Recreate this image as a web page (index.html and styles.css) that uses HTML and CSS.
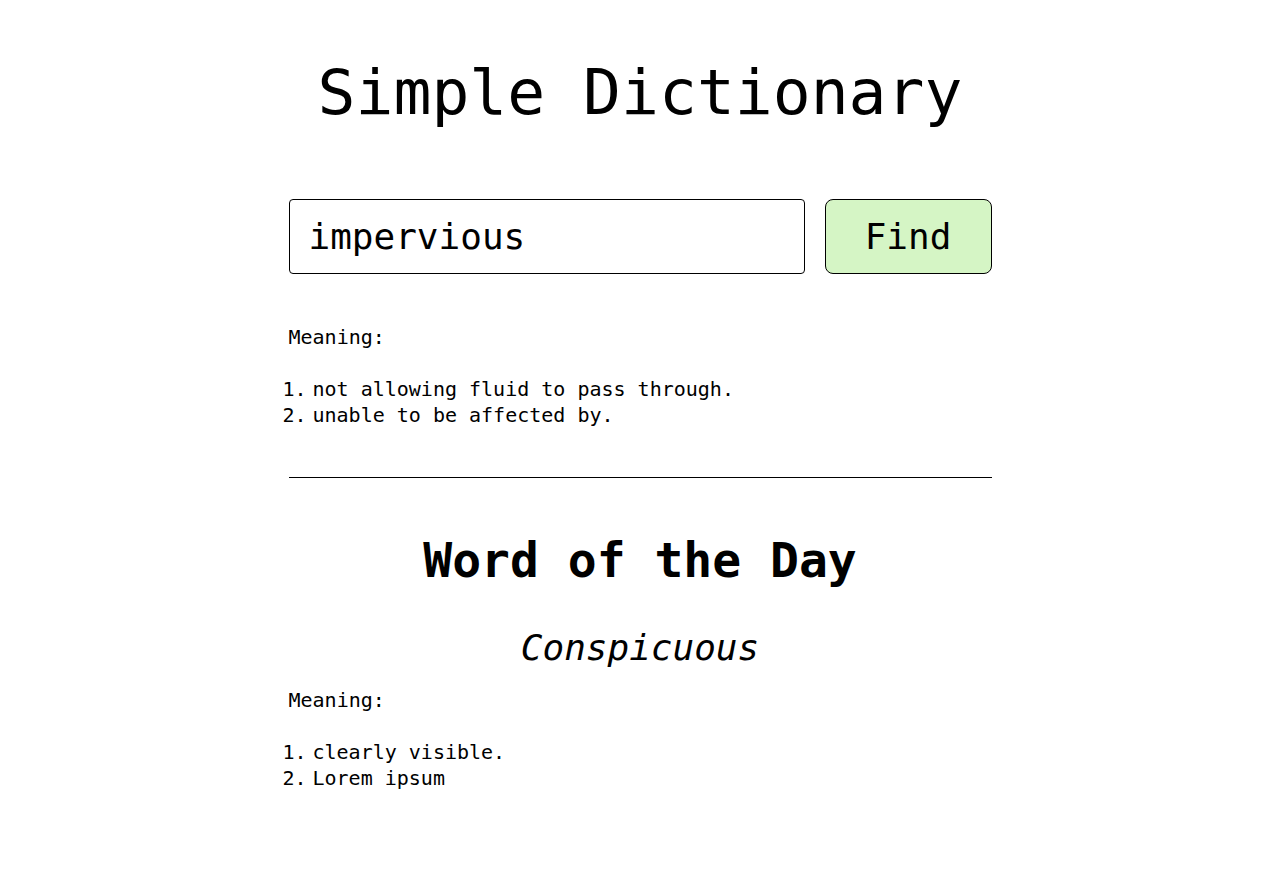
FILE: index.html
```html
<!DOCTYPE html>
<html lang="en">
<head>
<meta charset="utf-8">
<title>Simple Dictionary</title>
<link rel="stylesheet" href="styles.css">
</head>
<body>
<main class="page">
  <h1 class="title">Simple Dictionary</h1>
  <form class="search">
    <input class="search-input" type="text" value="impervious">
    <button class="search-btn" type="button">Find</button>
  </form>
  <section class="result">
    <p class="label">Meaning:</p>
    <ol class="defs">
      <li>not allowing fluid to pass through.</li>
      <li>unable to be affected by.</li>
    </ol>
  </section>
  <hr class="divider">
  <section class="wotd">
    <h2 class="wotd-title">Word of the Day</h2>
    <h3 class="wotd-word">Conspicuous</h3>
    <p class="label label-tight">Meaning:</p>
    <ol class="defs">
      <li>clearly visible.</li>
      <li>Lorem ipsum</li>
    </ol>
  </section>
</main>
</body>
</html>
```
FILE: styles.css
```css
* { box-sizing: border-box; }
html, body { margin: 0; padding: 0; background: #fff; }
body {
  font-family: "DejaVu Sans Mono", "Liberation Mono", monospace;
  color: #000;
}
.page {
  width: 703px;
  margin: 0 auto;
  padding-top: 55px;
  display: flex;
  flex-direction: column;
}
.title {
  margin: 0;
  font-size: 63px;
  line-height: 76px;
  font-weight: normal;
  text-align: center;
}
.search {
  margin: 68px 0 0;
  display: flex;
  gap: 20px;
}
.search-input {
  flex: 1;
  height: 75px;
  border: 1px solid #000;
  border-radius: 4px;
  padding: 0 19px;
  font-family: inherit;
  font-size: 36px;
  color: #000;
  background: #fff;
  outline: none;
}
.search-btn {
  width: 167px;
  height: 75px;
  border: 1px solid #000;
  border-radius: 8px;
  background: #d5f5c5;
  font-family: inherit;
  font-size: 36px;
  color: #000;
  padding: 0;
}
.result { margin-top: 50px; }
.label {
  margin: 0;
  font-size: 20px;
  line-height: 26px;
}
.defs {
  margin: 26px 0 0;
  padding: 0;
  font-size: 20px;
  line-height: 26px;
  list-style: none;
  counter-reset: def;
}
.defs li {
  display: flex;
  counter-increment: def;
}
.defs li::before {
  content: counter(def) ".";
  flex: none;
  width: 24px;
  margin-left: -6px;
  margin-right: 6px;
}
.divider {
  margin: 49px 0 0;
  border: 0;
  border-top: 1px solid #000;
  height: 0;
}
.wotd { display: flex; flex-direction: column; }
.wotd-title {
  margin: 53px 0 0;
  font-size: 48px;
  line-height: 58px;
  font-weight: bold;
  text-align: center;
}
.wotd-word {
  margin: 37px 0 0;
  font-size: 36px;
  line-height: 44px;
  font-weight: normal;
  font-style: italic;
  text-align: center;
}
.label-tight { margin-top: 17px; }
```
